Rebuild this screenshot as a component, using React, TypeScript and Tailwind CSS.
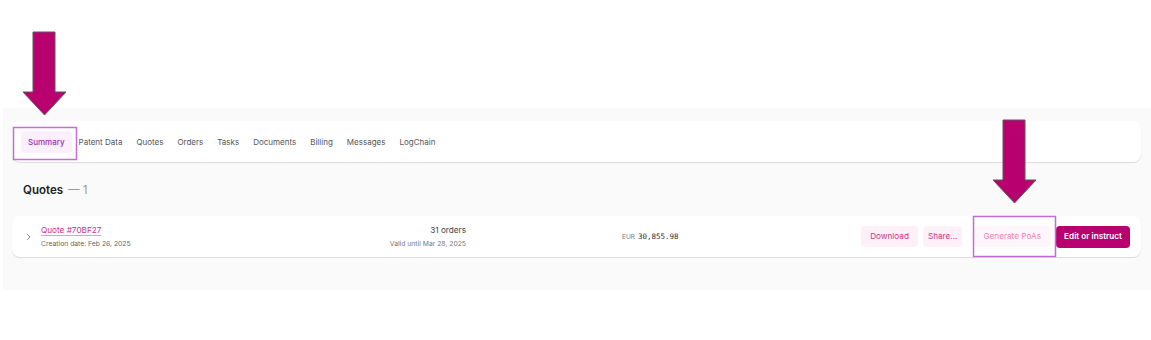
import React from "react";

const tabs = [
	"Summary",
	"Patent Data",
	"Quotes",
	"Orders",
	"Tasks",
	"Documents",
	"Billing",
	"Messages",
	"LogChain",
];

const ChevronRight: React.FC = () => (
	<svg width="8" height="8" viewBox="0 0 8 8" fill="none">
		<path d="M2.5 1.5L5 4L2.5 6.5" stroke="#777" strokeWidth="0.9" strokeLinecap="round" strokeLinejoin="round" />
	</svg>
);

// annotation layer: arrows + outline boxes drawn on top of the screenshot
const Annotations: React.FC = () => (
	<svg
		className="pointer-events-none absolute left-0 top-0"
		width="1151"
		height="340"
		viewBox="0 0 1151 340"
	>
		<polygon
			points="33,32 55,32 55,92 66,92 44.5,115 23,92 33,92"
			fill="#b8006e"
			stroke="#5a5a5a"
			strokeWidth="1"
		/>
		<polygon
			points="1003,120 1025,120 1025,180 1036,180 1014.5,203 993,180 1003,180"
			fill="#b8006e"
			stroke="#5a5a5a"
			strokeWidth="1"
		/>
		<rect x="13.5" y="127.5" width="63" height="32" fill="none" stroke="#c46cd4" strokeWidth="1.5" />
		<rect x="973.5" y="216.5" width="82" height="40" fill="none" stroke="#c46cd4" strokeWidth="1.5" />
	</svg>
);

export default function App() {
	return (
		<div
			className="relative h-[340px] w-full bg-white"
			style={{ fontFamily: "Inter, 'Liberation Sans', sans-serif" }}
		>
			<div className="h-[108px]" />
			<div className="ml-[3px] bg-[#fafafa] pb-[33px] pl-[9px] pr-[10px] pt-[13px]">
				{/* tab bar */}
				<div className="flex h-[41px] items-center rounded-lg bg-white pl-[9px] pt-[1px] shadow-[0_1px_1px_rgba(0,0,0,0.12)]">
					{tabs.map((tab) => (
						<div
							key={tab}
							className={
								tab === "Summary"
									? "flex h-[22px] items-center rounded-[4px] bg-[#faf0fb] px-[7px] text-[8px] font-medium text-[#9a2eaf]"
									: "flex h-[22px] items-center px-[7px] text-[8px] text-[#555]"
							}
						>
							{tab}
						</div>
					))}
				</div>

				<div className="flex h-[54px] items-center pl-[11px] pt-[3px]">
					<span className="text-[11.5px] font-semibold text-[#222]">Quotes</span>
					<span className="ml-[5px] text-[11.5px] text-[#999]">— 1</span>
				</div>

				{/* quote row */}
				<div className="flex h-[41px] items-center rounded-lg bg-white pl-[13px] pr-[11px] shadow-[0_1px_1px_rgba(0,0,0,0.12)]">
					<div className="flex w-[16px] items-center">
						<ChevronRight />
					</div>
					<div className="flex w-[425px] items-center justify-between">
						<div className="flex flex-col gap-[3px]">
							<span className="text-[8.2px] text-[#d0308a] underline decoration-[#e79ac5] underline-offset-2">
								Quote #70BF27
							</span>
							<span className="text-[6.8px] text-[#666]">Creation date: Feb 26, 2025</span>
						</div>
						<div className="flex flex-col items-end gap-[3px]">
							<span className="text-[8.2px] text-[#444]">31 orders</span>
							<span className="text-[6.8px] text-[#777]">Valid until Mar 28, 2025</span>
						</div>
					</div>
					<div className="ml-[156px] flex items-baseline gap-[3px]">
						<span className="text-[6.5px] text-[#777]">EUR</span>
						<span
							className="text-[7.5px] font-medium text-[#333]"
							style={{ fontFamily: "'DejaVu Sans Mono', monospace" }}
						>
							30,855.98
						</span>
					</div>
					<div className="ml-auto flex items-center gap-[5px]">
						<button className="h-[21px] rounded-[4px] bg-[#fdf0f7] px-[9px] text-[8.2px] text-[#cc3589]">
							Download
						</button>
						<button className="h-[21px] rounded-[4px] bg-[#fdf0f7] px-[5px] text-[8.2px] text-[#cc3589]">
							Share...
						</button>
						<button className="ml-[6px] h-[21px] rounded-[4px] bg-[#fef6fa] px-[10px] text-[8.2px] text-[#e386b9]">
							Generate PoAs
						</button>
						<button className="h-[22px] rounded-[4px] bg-[#b8006e] px-[8px] text-[8.2px] font-semibold text-white">
							Edit or instruct
						</button>
					</div>
				</div>
			</div>
			<Annotations />
		</div>
	);
}
